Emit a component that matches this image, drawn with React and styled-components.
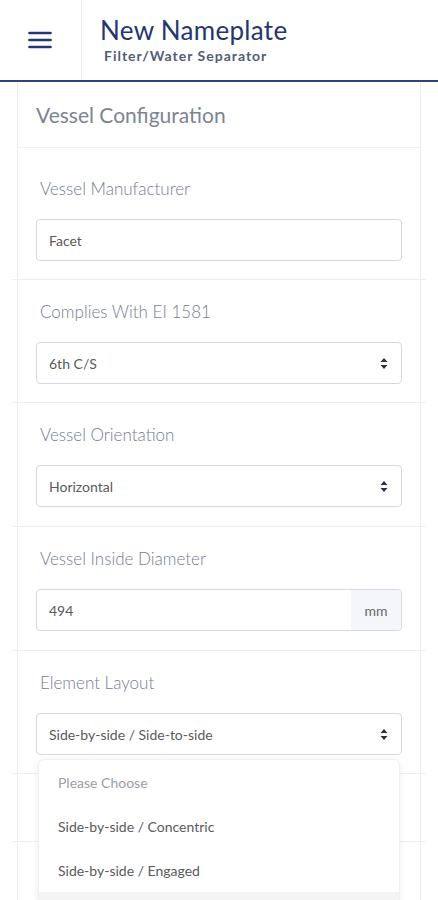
import styled, { createGlobalStyle } from "styled-components";

const GlobalStyle = createGlobalStyle`
  html, body {
    margin: 0;
    padding: 0;
    background: #fff;
    font-family: Lato, "Open Sans", sans-serif;
  }
  * { box-sizing: border-box; }
`;

const Page = styled.div`
  width: 438px;
  height: 900px;
  overflow: hidden;
  background: #fff;
`;

const Header = styled.header`
  display: flex;
  height: 82px;
  border-bottom: 2px solid #2c4478;
`;

const MenuCell = styled.div`
  width: 82px;
  border-right: 1px solid #ececec;
  display: flex;
  align-items: center;
  justify-content: center;
  padding-right: 2px;
`;

const TitleBlock = styled.div`
  display: flex;
  flex-direction: column;
  padding: 14px 0 0 18px;
`;

const Title = styled.h1`
  margin: 0;
  font-size: 26px;
  font-weight: 400;
  line-height: 32px;
  color: #263770;
  letter-spacing: 0.3px;
`;

const Subtitle = styled.div`
  margin: 1px 0 0 4px;
  font-size: 14px;
  font-weight: 700;
  color: #535c78;
  letter-spacing: 1px;
`;

const Main = styled.main`
  padding: 0 17px;
`;

const Card = styled.div`
  border: 1px solid #ececec;
  border-top: none;
`;

const CardHeader = styled.div`
  height: 66px;
  display: flex;
  align-items: center;
  padding: 0 18px;
  font-size: 21px;
  font-weight: 400;
  color: #7c8494;
  border-bottom: 1px solid #f0f0f0;
`;

const Section = styled.div`
  position: relative;
  margin: 0 -6px;
  padding: ${(p) => (p.$first ? "31px" : "22px")} 24px ${(p) => (p.$tall ? "19px" : "18px")};
  border-bottom: 1px solid #efefef;
  height: ${(p) => (p.$height ? `${p.$height}px` : "auto")};
`;

const Label = styled.div`
  padding-left: 4px;
  font-size: 17px;
  font-weight: 300;
  line-height: 20px;
  color: #737d92;
  margin-bottom: 20px;
`;

const Field = styled.div`
  position: relative;
  display: flex;
  align-items: center;
  height: 42px;
  border: 1px solid #d4d9e3;
  border-radius: 4px;
  background: #fff;
  font-size: 14px;
  color: #5a5a5a;
  overflow: visible;
`;

const Value = styled.span`
  flex: 1;
  padding-left: 12px;
`;

const Arrows = styled.svg`
  margin-right: 13px;
`;

const Addon = styled.div`
  width: 50px;
  height: 100%;
  display: flex;
  align-items: center;
  justify-content: center;
  background: #f4f6f9;
  border-radius: 0 4px 4px 0;
  color: #666;
`;

const Menu = styled.div`
  position: absolute;
  left: 1px;
  right: 1px;
  top: 45px;
  background: #fff;
  border: 1px solid #f0f0f0;
  border-radius: 6px 6px 0 0;
  box-shadow: 0 2px 8px rgba(0, 0, 0, 0.07);
  z-index: 2;
`;

const Option = styled.div`
  height: 44px;
  display: flex;
  align-items: center;
  padding-left: 19px;
  font-size: 14px;
  color: ${(p) => (p.$muted ? "#9b9ea5" : "#5a5a5a")};
  background: ${(p) => (p.$active ? "#f4f4f5" : "transparent")};
`;

const Hamburger = () => (
  <svg width="24" height="18" viewBox="0 0 24 18">
    <g stroke="#263770" strokeWidth="2.6" strokeLinecap="round">
      <line x1="1.5" y1="2" x2="22.5" y2="2" />
      <line x1="1.5" y1="9" x2="22.5" y2="9" />
      <line x1="1.5" y1="16" x2="22.5" y2="16" />
    </g>
  </svg>
);

const SelectArrows = () => (
  <Arrows width="8" height="11" viewBox="0 0 8 11">
    <path d="M4 0 L7.5 4 L0.5 4 Z" fill="#2a2f45" />
    <path d="M4 11 L7.5 7 L0.5 7 Z" fill="#2a2f45" />
  </Arrows>
);

const options = [
  "Please Choose",
  "Side-by-side / Concentric",
  "Side-by-side / Engaged",
  "Side-by-side / Side-to-side",
];

export default function App() {
  return (
    <Page>
      <GlobalStyle />
      <Header>
        <MenuCell>
          <Hamburger />
        </MenuCell>
        <TitleBlock>
          <Title>New Nameplate</Title>
          <Subtitle>Filter/Water Separator</Subtitle>
        </TitleBlock>
      </Header>
      <Main>
        <Card>
          <CardHeader>Vessel Configuration</CardHeader>
          <Section $first>
            <Label>Vessel Manufacturer</Label>
            <Field>
              <Value>Facet</Value>
            </Field>
          </Section>
          <Section>
            <Label>Complies With EI 1581</Label>
            <Field>
              <Value>6th C/S</Value>
              <SelectArrows />
            </Field>
          </Section>
          <Section $tall>
            <Label>Vessel Orientation</Label>
            <Field>
              <Value>Horizontal</Value>
              <SelectArrows />
            </Field>
          </Section>
          <Section $tall>
            <Label>Vessel Inside Diameter</Label>
            <Field>
              <Value>494</Value>
              <Addon>mm</Addon>
            </Field>
          </Section>
          <Section>
            <Label>Element Layout</Label>
            <Field>
              <Value>Side-by-side / Side-to-side</Value>
              <SelectArrows />
              <Menu>
                {options.map((o, i) => (
                  <Option key={o} $muted={i === 0} $active={i === 3}>
                    {i === 3 ? "" : o}
                  </Option>
                ))}
              </Menu>
            </Field>
          </Section>
          <Section $height={68} />
          <Section $height={124} />
        </Card>
      </Main>
    </Page>
  );
}
